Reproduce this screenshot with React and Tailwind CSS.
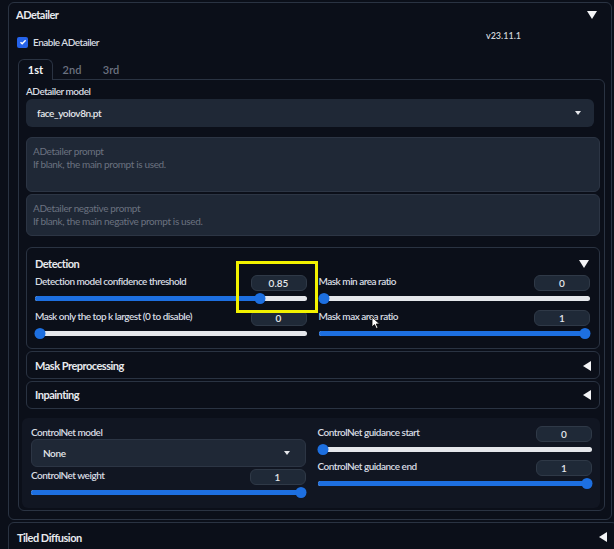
import React from "react";

const F = { fontFamily: "Lato, 'Liberation Sans', sans-serif" };

function Slider({ pct }) {
  return (
    <div className="relative h-[10px] w-full flex items-center">
      <div className="h-[5px] w-full rounded-full bg-[#e5e7eb]" />
      <div
        className="absolute left-0 h-[5px] rounded-full bg-[#1d6fe0]"
        style={{ width: `${pct}%` }}
      />
      <div
        className="absolute h-[11px] w-[11px] rounded-full bg-[#1d6fe0] -translate-x-1/2"
        style={{ left: `calc(${pct}% ${pct === 0 ? "+ 5px" : pct === 100 ? "- 5px" : "+ 0px"})` }}
      />
    </div>
  );
}

function Num({ v }) {
  return (
    <div className="w-[56px] h-[16px] rounded-md bg-[#1f2937] border border-[#2f3947] flex items-center justify-center text-[10px] font-semibold text-[#e5e7eb]">
      {v}
    </div>
  );
}

const title = "text-[11px] font-bold text-[#e8eaee] tracking-[-0.5px]";
const label = "text-[10px] font-semibold text-[#d8dce2] tracking-[-0.5px]";

function SliderBlock({ label: text, v, pct }) {
  return (
    <div className="flex flex-col">
      <div className="flex items-start justify-between h-[16px]">
        <span className={`${label} leading-[12px]`}>{text}</span>
        <Num v={v} />
      </div>
      <div className="mt-[2px]">
        <Slider pct={pct} />
      </div>
    </div>
  );
}

function TriDown({ className = "" }) {
  return <div className={`w-0 h-0 border-l-[5px] border-r-[5px] border-t-[8px] border-l-transparent border-r-transparent border-t-[#f3f4f6] ${className}`} />;
}
function TriLeft({ className = "" }) {
  return <div className={`w-0 h-0 border-t-[5px] border-b-[5px] border-r-[8px] border-t-transparent border-b-transparent border-r-[#f3f4f6] ${className}`} />;
}

export default function App() {
  return (
    <div className="relative w-[614px] h-[549px] overflow-hidden bg-[#0b0f19] text-[#e5e7eb] pt-[2px]" style={F}>
      {/* ADetailer panel */}
      <div className="ml-[8px] mr-[2px] h-[518px] border border-[#2a3342] rounded-md flex flex-col">
        <div className="h-[24px] flex items-center justify-between pl-[7px] pr-[14px]">
          <span className={title}>ADetailer</span>
          <TriDown />
        </div>
        <div className="mt-[8px] h-[14px] flex items-center pl-[8px]">
          <div className="w-[11px] h-[11px] rounded-[2px] bg-[#2563eb] flex items-center justify-center">
            <svg width="8" height="8" viewBox="0 0 8 8">
              <path d="M1.5 4.2 L3.2 5.8 L6.6 2.2" stroke="white" strokeWidth="1.4" fill="none" />
            </svg>
          </div>
          <span className={`ml-[5px] ${label}`}>Enable ADetailer</span>
          <span className="ml-auto mr-[90px] -mt-[12px] text-[9px] font-semibold text-[#d1d5db]">v23.11.1</span>
        </div>

        {/* Tabs */}
        <div className="mt-[10px] ml-[9px] mr-[6px] flex flex-col">
          <div className="flex items-end h-[21px] relative z-10">
            <div className="w-[35px] h-[21px] border border-b-0 border-[#2a3342] rounded-t-md bg-[#0b0f19] flex items-center justify-center text-[11px] font-bold text-[#f3f4f6]">
              1st
            </div>
            <div className="w-[38px] h-[20px] flex items-center justify-center text-[11px] font-semibold text-[#6b7280]">2nd</div>
            <div className="w-[40px] h-[20px] flex items-center justify-center text-[11px] font-semibold text-[#6b7280]">3rd</div>
          </div>
          <div className="-mt-[1px] h-[432px] border border-[#2a3342] rounded-b-md rounded-tr-md flex flex-col pl-[7px] pr-[4px]">
            <div className={`mt-[5px] h-[13px] flex items-center ${label}`}>ADetailer model</div>
            <div className="mt-[1px] mr-[6px] h-[28px] rounded-md bg-[#1f2836] flex items-center justify-between pl-[11px] pr-[13px]">
              <span className="text-[10px] font-semibold text-[#e5e7eb] tracking-[-0.4px]">face_yolov8n.pt</span>
              <div className="w-0 h-0 border-l-[3px] border-r-[3px] border-t-[4px] border-l-transparent border-r-transparent border-t-[#e5e7eb]" />
            </div>
            <div className="mt-[10px] h-[55px] rounded-md bg-[#1f2836] border border-[#2c3544] px-[6px] pt-[7px] text-[10px] leading-[13px] text-[#6b7280] tracking-[-0.35px]">
              <div>ADetailer prompt</div>
              <div>If blank, the main prompt is used.</div>
            </div>
            <div className="mt-[2px] h-[42px] rounded-md bg-[#1f2836] border border-[#2c3544] px-[6px] pt-[7px] text-[10px] leading-[13px] text-[#6b7280] tracking-[-0.35px]">
              <div>ADetailer negative prompt</div>
              <div>If blank, the main negative prompt is used.</div>
            </div>

            {/* Detection */}
            <div className="mt-[11px] h-[102px] border border-[#2a3342] rounded-md pl-[8px] pr-[9px] flex flex-col">
              <div className="h-[28px] flex items-center justify-between pt-[4px]">
                <span className={title}>Detection</span>
                <TriDown className="mr-[1px]" />
              </div>
              <div className="-mt-[1px] grid grid-cols-2 gap-x-[12px]">
                <div className="flex flex-col gap-[7px]">
                  <SliderBlock label="Detection model confidence threshold" v="0.85" pct={83} />
                  <SliderBlock label="Mask only the top k largest (0 to disable)" v="0" pct={0} />
                </div>
                <div className="flex flex-col gap-[7px]">
                  <SliderBlock label="Mask min area ratio" v="0" pct={0} />
                  <SliderBlock label="Mask max area ratio" v="1" pct={100} />
                </div>
              </div>
            </div>

            <div className="mt-[2px] h-[28px] border border-[#2a3342] rounded-md flex items-center justify-between pl-[8px] pr-[8px] pt-[2px]">
              <span className={title}>Mask Preprocessing</span>
              <TriLeft />
            </div>
            <div className="mt-[2px] h-[28px] border border-[#2a3342] rounded-md flex items-center justify-between pl-[8px] pr-[8px]">
              <span className={title}>Inpainting</span>
              <TriLeft />
            </div>

            {/* ControlNet */}
            <div className="mt-[9px] -ml-[4px] h-[90px] rounded-md bg-[#111622] pl-[9px] pr-[8px] pt-[8px] grid grid-cols-2 gap-x-[12px]">
              <div className="flex flex-col">
                <div className={`h-[13px] flex items-center ${label}`}>ControlNet model</div>
                <div className="h-[28px] rounded-md bg-[#1f2836] border border-[#2c3544] flex items-center justify-between pl-[11px] pr-[15px]">
                  <span className="text-[10px] font-semibold text-[#e5e7eb] tracking-[-0.4px]">None</span>
                  <div className="w-0 h-0 border-l-[3px] border-r-[3px] border-t-[4px] border-l-transparent border-r-transparent border-t-[#e5e7eb]" />
                </div>
                <div className="mt-[2px]">
                  <SliderBlock label="ControlNet weight" v="1" pct={100} />
                </div>
              </div>
              <div className="flex flex-col pr-[0px]">
                <SliderBlock label="ControlNet guidance start" v="0" pct={0} />
                <div className="mt-[6px]">
                  <SliderBlock label="ControlNet guidance end" v="1" pct={100} />
                </div>
              </div>
            </div>
          </div>
        </div>
      </div>

      {/* Tiled Diffusion */}
      <div className="mt-[2px] ml-[8px] -mr-[4px] h-[40px] border border-[#2a3342] rounded-md flex items-start justify-between pl-[8px] pr-[10px] pt-[7px]">
        <span className={title}>Tiled Diffusion</span>
        <TriLeft className="mt-[2px]" />
      </div>

      {/* Yellow highlight annotation */}
      <div className="absolute left-[236px] top-[261px] w-[82px] h-[52px] border-[3px] border-[#f2f200]" />

      {/* Mouse cursor */}
      <svg className="absolute left-[371px] top-[316px]" width="10" height="14" viewBox="0 0 10 14">
        <path d="M1 1 L1 11 L3.5 8.6 L5.4 12.6 L7 11.8 L5.2 8 L8.6 8 Z" fill="white" stroke="black" strokeWidth="0.8" />
      </svg>
    </div>
  );
}
